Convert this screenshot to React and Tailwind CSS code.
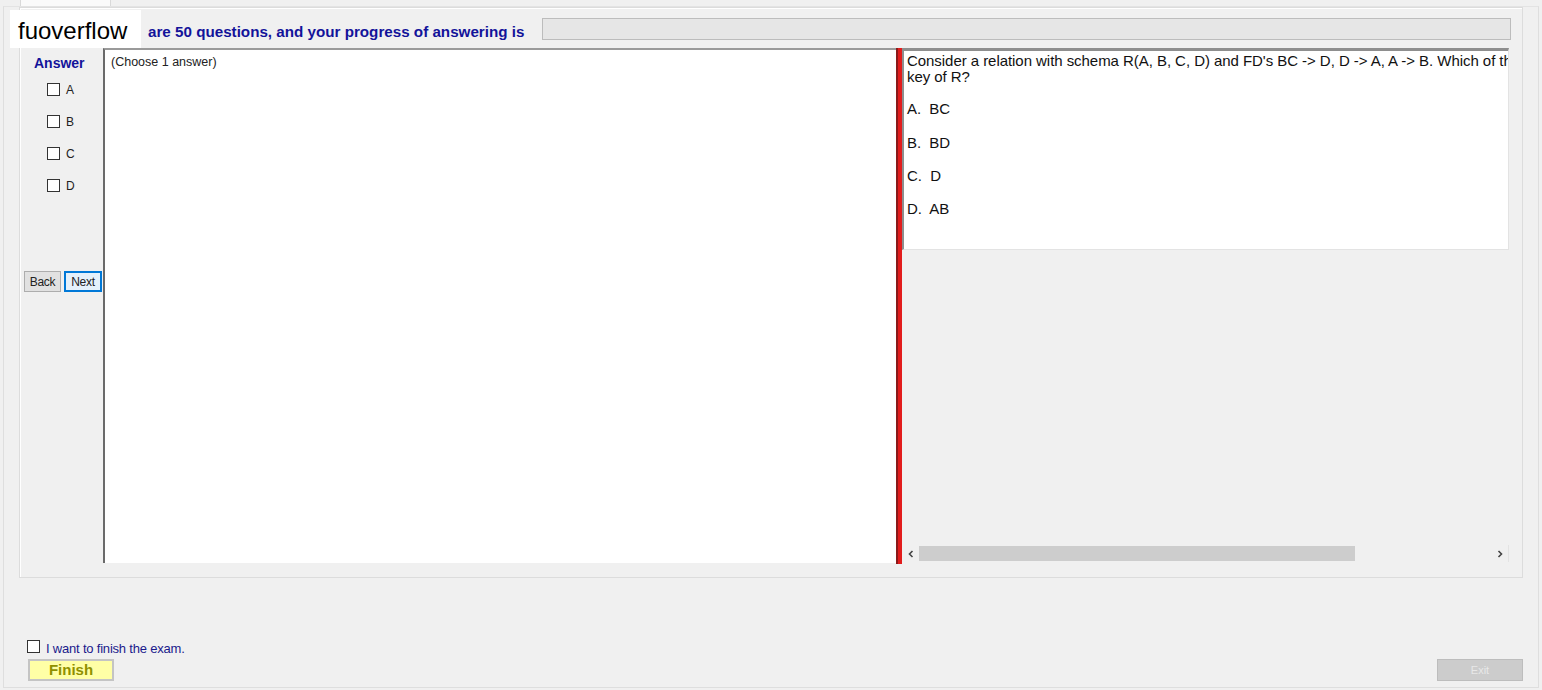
export default function App() {
  const opts = ["A", "B", "C", "D"];
  return (
    <div className="relative w-[1542px] h-[690px] overflow-hidden bg-[#f0f0f0] font-['Liberation_Sans',Arial,sans-serif] text-black">
      {/* tab strip */}
      <div className="flex h-[6px]">
        <div className="ml-[20px] w-[91px] h-[6px] bg-[#fafafa] border-x border-[#d9d9d9]"></div>
      </div>
      {/* tab page */}
      <div className="ml-[3px] w-[1536px] h-[682px] border border-[#dedede] border-t-[#e3e3e3] bg-[#f0f0f0] flex flex-col">
        {/* group box */}
        <div className="ml-[15px] w-[1504px] h-[571px] border border-[#dcdcdc] shadow-[inset_1px_1px_0_#ffffff] flex flex-col pl-[3px] pt-[10px]">
          {/* header row */}
          <div className="flex items-center h-[22px]">
            <div className="w-[519px] pl-[125px] text-[15.2px] font-bold text-[#13139a] whitespace-nowrap leading-none pt-[5px]">
              are 50 questions, and your progress of answering is
            </div>
            <div className="w-[969px] h-[22px] bg-[#e6e6e6] border border-[#bcbcbc]"></div>
          </div>
          {/* main row */}
          <div className="flex mt-[8px] h-[516px]">
            {/* answer column */}
            <div className="w-[80px] flex flex-col">
              <div className="pl-[11px] pt-[8px] text-[14px] font-bold text-[#13139a] leading-none">Answer</div>
              <div className="flex flex-col gap-[19px] pl-[24px] mt-[13px]">
                {opts.map((o) => (
                  <div key={o} className="flex items-center gap-[6px] h-[13px]">
                    <div className="w-[13px] h-[13px] border border-[#333] bg-white"></div>
                    <span className="text-[12px] text-[#222] leading-none">{o}</span>
                  </div>
                ))}
              </div>
              <div className="flex gap-[3px] mt-[79px] pl-[1px]">
                <div className="w-[37px] h-[21px] bg-[#e1e1e1] border border-[#adadad] text-[12px] text-[#222] flex items-center justify-center tracking-[-0.3px]">Back</div>
                <div className="w-[38px] h-[21px] bg-[#e5f1fb] border-2 border-[#0078d7] text-[12px] text-[#222] flex items-center justify-center tracking-[-0.3px]">Next</div>
              </div>
            </div>
            {/* center panel */}
            <div className="w-[793px] h-[515px] bg-white border-l-2 border-t-2 border-l-[#6a6a6a] border-t-[#9a9a9a] pl-[6px] pt-[3px]">
              <div className="text-[12.5px] text-[#222]">(Choose 1 answer)</div>
            </div>
            {/* red divider */}
            <div className="w-[6px] h-[516px] bg-[#e21c1c] border-l-2 border-[#8a1a1a]"></div>
            {/* right panel */}
            <div className="w-[607px] h-[515px] flex flex-col">
              <div className="h-[202px] bg-white border-t-[3px] border-l-2 border-t-[#8e8e8e] border-l-[#8e8e8e] border-r border-r-[#e3e3e3] border-b border-b-[#e3e3e3] pl-[3px] pt-[2px] overflow-hidden text-[15px] text-[#111] tracking-[-0.05px]">
                <div className="leading-[16px] whitespace-nowrap">Consider a relation with schema R(A, B, C, D) and FD's BC -&gt; D, D -&gt; A, A -&gt; B. Which of th</div>
                <div className="leading-[16px]">key of R?</div>
                <div className="leading-[16px] mt-[16px]">A.&nbsp; BC</div>
                <div className="leading-[16px] mt-[18px]">B.&nbsp; BD</div>
                <div className="leading-[16px] mt-[17px]">C.&nbsp; D</div>
                <div className="leading-[16px] mt-[17px]">D.&nbsp; AB</div>
              </div>
              <div className="flex-1"></div>
              <div className="h-[17px] mb-[1px] flex items-center bg-[#f0f0f0] border-r border-[#e3e3e3]">
                <div className="w-[17px] h-[17px] flex items-center justify-center">
                  <svg width="8" height="8" viewBox="0 0 8 8"><path d="M5.5 1 L2.5 4 L5.5 7" stroke="#444" strokeWidth="1.6" fill="none" /></svg>
                </div>
                <div className="w-[436px] h-[15px] bg-[#cdcdcd]"></div>
                <div className="flex-1"></div>
                <div className="w-[17px] h-[17px] flex items-center justify-center">
                  <svg width="8" height="8" viewBox="0 0 8 8"><path d="M2.5 1 L5.5 4 L2.5 7" stroke="#444" strokeWidth="1.6" fill="none" /></svg>
                </div>
              </div>
            </div>
          </div>
        </div>
        {/* bottom area */}
        <div className="flex items-center gap-[6px] ml-[23px] mt-[61px] h-[14px]">
          <div className="w-[13px] h-[13px] border border-[#333] bg-white"></div>
          <span className="text-[13px] text-[#1a1a8c] tracking-[-0.2px] leading-none pt-[4px]">I want to finish the exam.</span>
        </div>
        <div className="flex justify-between ml-[24px] mr-[15px] mt-[6px]">
          <div className="w-[86px] h-[22px] bg-[#ffffa6] border-2 border-[#c4c4c4] flex items-center justify-center text-[15px] font-bold text-[#8f9000]">Finish</div>
          <div className="w-[86px] h-[22px] bg-[#cccccc] border border-[#bdbdbd] flex items-center justify-center text-[11px] text-[#e8e8e8]">Exit</div>
        </div>
      </div>
      {/* watermark overlay */}
      <div className="absolute left-[10px] top-[10px] w-[131px] h-[38px] bg-white flex items-center pl-[8px] pt-[4px] text-[24px] text-black">
        fuoverflow
      </div>
    </div>
  );
}
